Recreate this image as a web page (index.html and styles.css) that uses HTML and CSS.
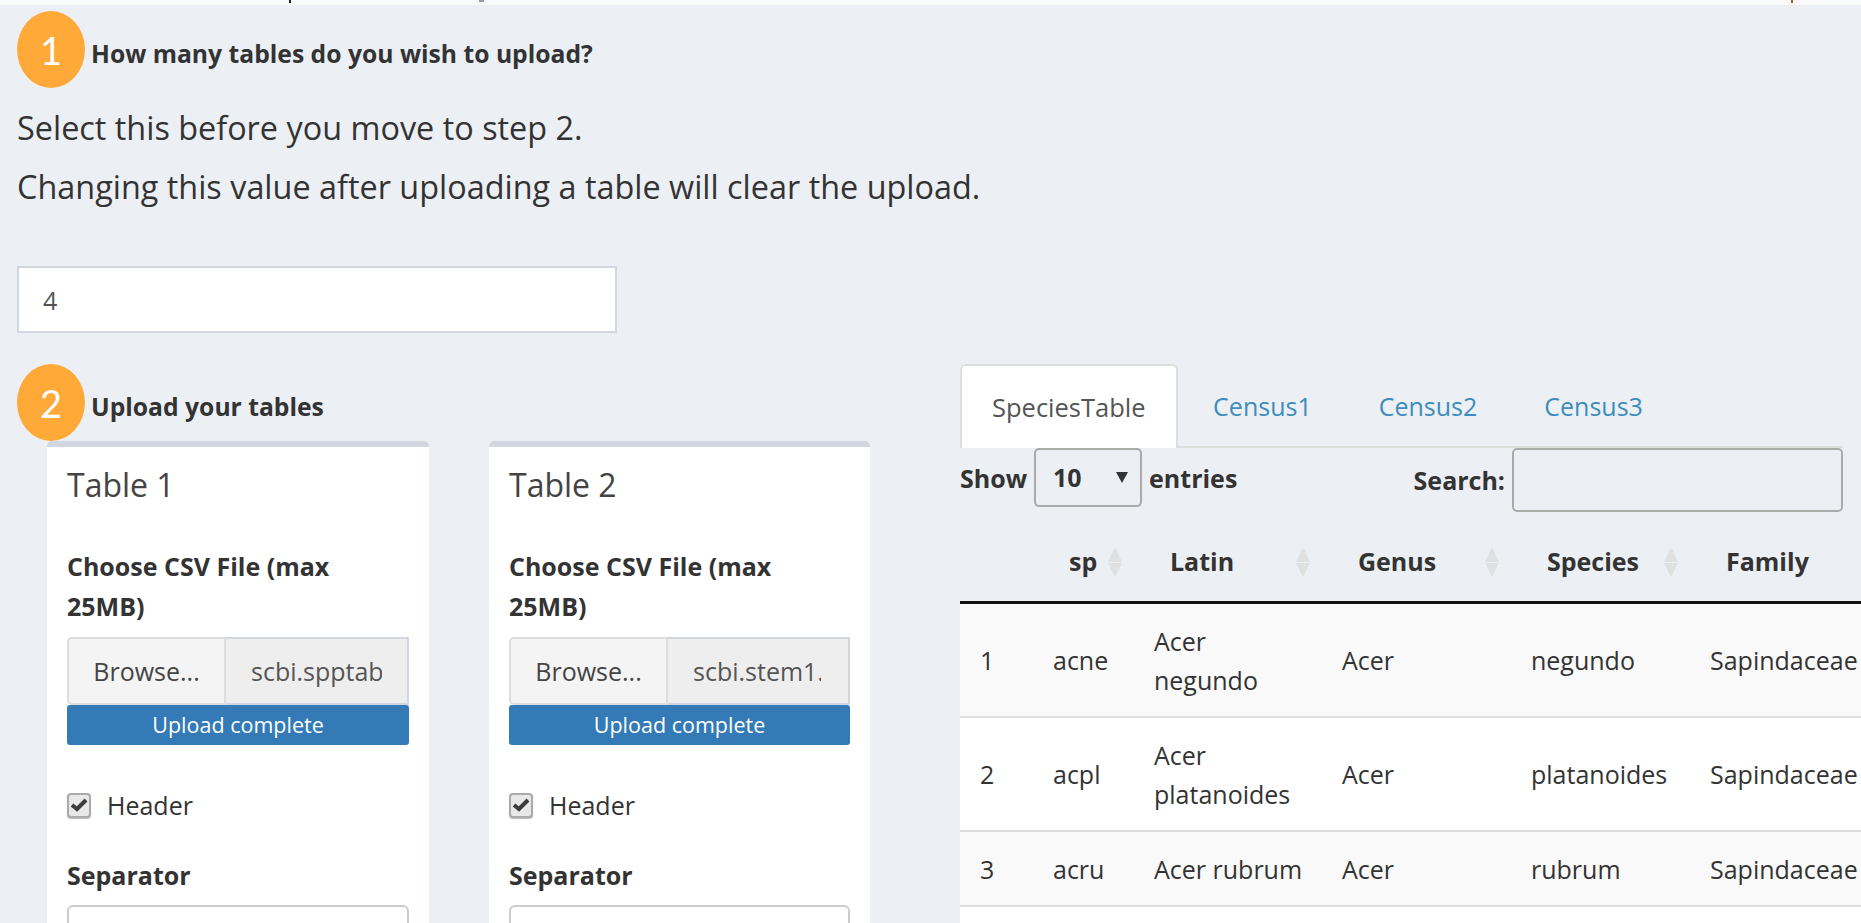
FILE: index.html
```html
<!DOCTYPE html>
<html lang="en">
<head>
  <meta charset="UTF-8">
  <title>Upload tables</title>
  <link rel="stylesheet" href="styles.css">
</head>
<body>
  <div class="topbar">
    <span class="tick tick-a"></span>
    <span class="tick tick-b"></span>
    <span class="tick tick-c"></span>
  </div>
  <div class="content">
    <div class="step step-one">
      <div class="badge">1</div>
      <h4 class="step-title">How many tables do you wish to upload?</h4>
    </div>
    <p class="intro intro-first">Select this before you move to step 2.</p>
    <p class="intro">Changing this value after uploading a table will clear the upload.</p>
    <input class="count-input" type="text" value="4">

    <div class="columns">
      <div class="left-col">
        <div class="step">
          <div class="badge">2</div>
          <h4 class="step-title">Upload your tables</h4>
        </div>
        <div class="boxes">
          <div class="box">
            <h3 class="box-title">Table 1</h3>
            <label class="field-label">Choose CSV File (max<br>25MB)</label>
            <div class="file-row">
              <span class="browse">Browse...</span>
              <span class="file-name"><span class="file-text">scbi.spptable.csv</span></span>
            </div>
            <div class="progress">Upload complete</div>
            <div class="check-row">
              <span class="checkbox">
                <svg viewBox="0 0 18 14" width="18" height="14"><path d="M2 7 L7 11 L16 2" fill="none" stroke="#3c3c3c" stroke-width="4"/></svg>
              </span>
              <span>Header</span>
            </div>
            <label class="field-label sep-label">Separator</label>
            <div class="select-box"></div>
          </div>
          <div class="box box-second">
            <h3 class="box-title">Table 2</h3>
            <label class="field-label">Choose CSV File (max<br>25MB)</label>
            <div class="file-row">
              <span class="browse">Browse...</span>
              <span class="file-name"><span class="file-text">scbi.stem1.csv</span></span>
            </div>
            <div class="progress">Upload complete</div>
            <div class="check-row">
              <span class="checkbox">
                <svg viewBox="0 0 18 14" width="18" height="14"><path d="M2 7 L7 11 L16 2" fill="none" stroke="#3c3c3c" stroke-width="4"/></svg>
              </span>
              <span>Header</span>
            </div>
            <label class="field-label sep-label">Separator</label>
            <div class="select-box"></div>
          </div>
        </div>
      </div>

      <div class="right-col">
        <ul class="tabs">
          <li class="tab active">SpeciesTable</li>
          <li class="tab">Census1</li>
          <li class="tab">Census2</li>
          <li class="tab">Census3</li>
        </ul>
        <div class="table-controls">
          <div class="length-ctl">
            <span>Show</span>
            <span class="length-select">10<i class="caret"></i></span>
            <span>entries</span>
          </div>
          <div class="search-ctl">
            <span>Search:</span>
            <span class="search-input"></span>
          </div>
        </div>
        <div class="table-wrap">
          <table class="data-table">
            <colgroup>
              <col class="c-num"><col class="c-sp"><col class="c-latin"><col class="c-genus"><col class="c-species"><col class="c-family">
            </colgroup>
            <thead>
              <tr>
                <th></th>
                <th>sp<svg class="sort" viewBox="0 0 16 30"><path d="M8 0 L15 15 L1 15 Z M8 30 L15 16 L1 16 Z"/></svg></th>
                <th>Latin<svg class="sort" viewBox="0 0 16 30"><path d="M8 0 L15 15 L1 15 Z M8 30 L15 16 L1 16 Z"/></svg></th>
                <th>Genus<svg class="sort" viewBox="0 0 16 30"><path d="M8 0 L15 15 L1 15 Z M8 30 L15 16 L1 16 Z"/></svg></th>
                <th>Species<svg class="sort" viewBox="0 0 16 30"><path d="M8 0 L15 15 L1 15 Z M8 30 L15 16 L1 16 Z"/></svg></th>
                <th>Family</th>
              </tr>
            </thead>
            <tbody>
              <tr class="odd"><td>1</td><td>acne</td><td>Acer<br>negundo</td><td>Acer</td><td>negundo</td><td>Sapindaceae</td></tr>
              <tr><td>2</td><td>acpl</td><td>Acer<br>platanoides</td><td>Acer</td><td>platanoides</td><td>Sapindaceae</td></tr>
              <tr class="odd"><td>3</td><td>acru</td><td>Acer rubrum</td><td>Acer</td><td>rubrum</td><td>Sapindaceae</td></tr>
              <tr><td>&nbsp;</td><td></td><td></td><td></td><td></td><td></td></tr>
            </tbody>
          </table>
        </div>
      </div>
    </div>
  </div>
</body>
</html>
```

FILE: styles.css
```css
* {
  box-sizing: border-box;
}
html, body {
  height: 923px;
  margin: 0;
  overflow: hidden;
}
body {
  background-color: #ecf0f5;
  color: #333;
  font-family: "Open Sans", "Noto Sans", sans-serif;
  font-size: 25px;
}

/* what is left of the page header above the scroll position */
.topbar {
  position: relative;
  height: 6px;
  background-color: #fafafa;
  border-bottom: 1px solid #f0f0f0;
}
.tick {
  position: absolute;
  top: 0;
  width: 2px;
  height: 3px;
  background-color: #222;
}
.tick-a { left: 289px; }
.tick-b { left: 479px; width: 5px; height: 2px; background-color: #99a; }
.tick-c { left: 1791px; background-color: #a85b10; }

.content {
  padding-left: 17px;
}

.step {
  display: flex;
}
.step-one {
  margin-top: 5px;
}
.badge {
  display: flex;
  align-items: center;
  justify-content: center;
  width: 68px;
  height: 77px;
  border-radius: 50%;
  background-color: #ffa939;
  color: #fff;
  font-family: "Lato", sans-serif;
  font-size: 38px;
}
.step-title {
  margin: 0;
  padding: 27px 0 0 6px;
  font-size: 24.7px;
  line-height: 32px;
  font-weight: 700;
}

.intro {
  margin: 17px 0 0;
  font-size: 32.4px;
  line-height: 42px;
  font-weight: 400;
}
.intro-first {
  margin-top: 18px;
}
.count-input {
  display: block;
  width: 600px;
  height: 67px;
  margin-top: 59px;
  padding: 0 24px;
  border: 2px solid #d2d6de;
  background-color: #fff;
  color: #555;
  font: inherit;
}

.columns {
  display: flex;
  margin-top: 31px;
}
.left-col {
  width: 943px;
  flex: none;
}
.boxes {
  display: flex;
  margin-left: 30px;
  gap: 60px;
}
.box {
  width: 382px;
  height: 490px;
  padding: 18px 20px 0 20px;
  background-color: #fff;
  border-top: 6px solid #d2d6de;
  border-radius: 5px 5px 0 0;
}
.box-second {
  width: 381px;
}
.box-title {
  margin: 0;
  font-size: 32px;
  line-height: 39px;
  font-weight: 400;
  color: #444;
}
.field-label {
  display: block;
  margin: 43px 0 11px;
  font-weight: 700;
  font-size: 25px;
  line-height: 39.5px;
}
.file-row {
  display: flex;
  height: 68px;
}
.browse {
  display: flex;
  align-items: center;
  justify-content: center;
  width: 159px;
  flex: none;
  background-color: #f4f4f4;
  border: 2px solid #ddd;
  border-radius: 5px 0 0 5px;
  color: #444;
}
.file-name {
  flex: 1;
  min-width: 0;
  display: flex;
  align-items: center;
  padding-left: 25px;
  background-color: #eee;
  border: 2px solid #d2d6de;
  border-left: 0;
  color: #555;
}
.file-text {
  display: block;
  width: 131px;
  overflow: hidden;
  white-space: nowrap;
}
.box-second .file-text {
  width: 128px;
}
.progress {
  height: 40px;
  background-color: #337ab7;
  border-radius: 3px;
  color: #fff;
  text-align: center;
  line-height: 39px;
  font-size: 21.5px;
}
.check-row {
  display: flex;
  align-items: center;
  gap: 16px;
  margin-top: 48px;
  height: 24px;
}
.checkbox {
  display: flex;
  align-items: center;
  justify-content: center;
  width: 24px;
  height: 25px;
  background-color: #e8e8e8;
  border: 2px solid #aaa;
  border-radius: 4px;
  box-shadow: 0 1px 1px #bbb;
}
.sep-label {
  margin-top: 39px;
  margin-bottom: 9px;
}
.select-box {
  height: 60px;
  background-color: #fff;
  border: 2px solid #ccc;
  border-radius: 6px;
}

.right-col {
  width: 901px;
  flex: none;
}
.tabs {
  display: flex;
  gap: 4px;
  width: 883px;
  height: 84px;
  margin: 0;
  padding: 0;
  list-style: none;
  border-bottom: 2px solid #ddd;
  font-size: 25px;
}
.tab {
  height: 84px;
  padding: 0 31.5px;
  line-height: 84px;
  color: #3c8dbc;
}
.tab.active {
  background-color: #fff;
  border: 2px solid #ddd;
  border-bottom: 0;
  border-radius: 6px 6px 0 0;
  padding: 0 30px;
  line-height: 82px;
  color: #555;
  font-size: 25.5px;
}

.table-controls {
  display: flex;
  justify-content: space-between;
  width: 883px;
  height: 64px;
  font-weight: 700;
}
.length-ctl {
  display: flex;
  align-items: center;
  gap: 7px;
  height: 59px;
}
.length-select {
  position: relative;
  display: block;
  width: 108px;
  height: 59px;
  padding-left: 17px;
  line-height: 55px;
  border: 2px solid #aaa;
  border-radius: 5px;
}
.caret {
  position: absolute;
  top: 22px;
  right: 12px;
  width: 0;
  height: 0;
  border-left: 6px solid transparent;
  border-right: 6px solid transparent;
  border-top: 11px solid #333;
}
.search-ctl {
  display: flex;
  align-items: center;
  gap: 7px;
}
.search-input {
  display: block;
  width: 331px;
  height: 64px;
  border: 2px solid #aaa;
  border-radius: 5px;
}

.table-wrap {
  overflow: hidden;
}
.data-table {
  width: 920px;
  table-layout: fixed;
  border-collapse: collapse;
  background-color: #fff;
}
.c-num { width: 73px; }
.c-sp { width: 101px; }
.c-latin { width: 188px; }
.c-genus { width: 189px; }
.c-species { width: 179px; }
.c-family { width: 190px; }

.data-table th {
  position: relative;
  height: 90px;
  padding: 24px 0 14px 36px;
  background-color: #ecf0f5;
  border-bottom: 3px solid #111;
  text-align: left;
  font-weight: 700;
  font-size: 25px;
}
.sort {
  position: absolute;
  top: 35px;
  right: 11px;
  width: 16px;
  height: 30px;
  fill: #e0e0e0;
}
.data-table td {
  padding: 18px 0 16px 20px;
  line-height: 39px;
  border-bottom: 2px solid #ddd;
  white-space: nowrap;
}
.data-table tr.odd td {
  background-color: #f9f9f9;
}
```
